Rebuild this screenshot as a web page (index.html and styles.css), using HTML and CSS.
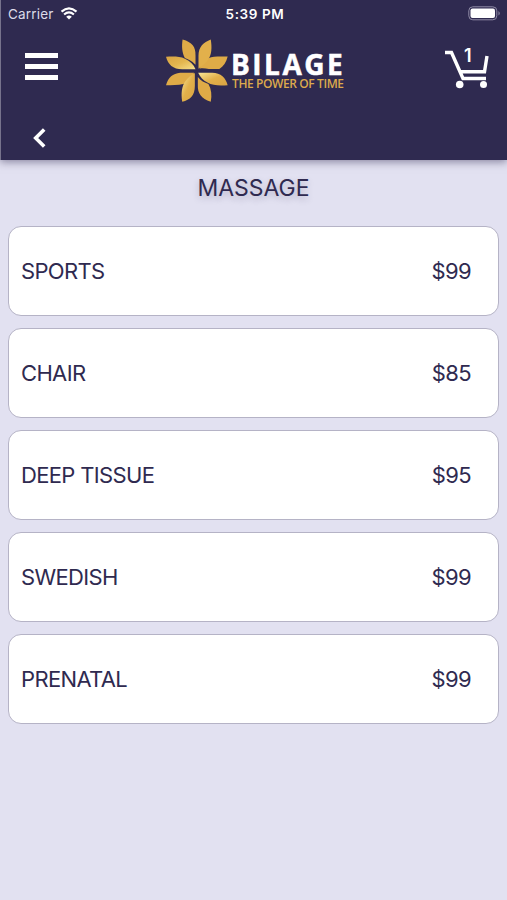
FILE: index.html
```html
<!DOCTYPE html>
<html lang="en">
<head>
  <meta charset="UTF-8" />
  <meta name="viewport" content="width=device-width, initial-scale=1" />
  <title>Bilage - Massage</title>
  <link rel="stylesheet" href="styles.css">
</head>
<body>
  <header class="header">
    <div class="status">
      <div class="carrier">
        <span>Carrier</span>
        <svg class="wifi" viewBox="0 0 18 13" width="18" height="13">
          <path d="M1.500 4.600Q9-2 16.500 4.600M4.100 7.500Q9 3.300 13.900 7.500" fill="none" stroke="#fff" stroke-width="2.200" />
          <path d="M6.200 9.700Q9 7.500 11.800 9.700L9 12.500Z" fill="#fff" />
        </svg>
      </div>
      <span class="time">5:39 PM</span>
      <svg class="battery" viewBox="0 0 33 15" width="33" height="15">
        <rect x="0.800" y="0.800" width="28" height="13" rx="4" fill="none" stroke="#8f8ba6" />
        <rect x="2.500" y="2.500" width="24.500" height="9.600" rx="2" fill="#fff" />
        <path d="M30.500 5Q33 7.300 30.500 9.600Z" fill="#8f8ba6" />
      </svg>
    </div>

    <div class="navbar">
      <button class="menu" aria-label="Menu"><i></i><i></i><i></i></button>
      <div class="logo">
        <svg class="flower" viewBox="35 27 187 189" width="62" height="63">
          <defs>
            <linearGradient id="gold" x1="0" y1="0" x2="1" y2="1">
              <stop offset="0" stop-color="#d9a443" />
              <stop offset="0.500" stop-color="#e3b64f" />
              <stop offset="1" stop-color="#f7e08c" />
            </linearGradient>
            <linearGradient id="goldBack" x1="1" y1="1" x2="0" y2="0">
              <stop offset="0" stop-color="#d9a443" />
              <stop offset="0.500" stop-color="#e2b04a" />
              <stop offset="1" stop-color="#f9e798" />
            </linearGradient>
          </defs>
          <g fill="#dfab47">
            <path d="M85 28C114 36 125 50 124 76V104C112 92 101 88 92 84C83 68 82 48 85 28Z" />
            <path d="M221 79H190C162 79 146 92 136 116C146 113 155 116 164 117H196C208 109 217 97 221 79Z" />
            <path d="M170 216C141 206 130 190 131 166V141C140 153 151 158 163 162C172 178 174 196 170 216Z" />
            <path d="M35 166C42 142 55 130 78 128H120C112 145 105 150 98 158C82 167 58 166 35 166Z" />
          </g>
          <g>
            <path fill="url(#gold)" d="M35 80C54 79 76 78 92 86C108 94 119 104 124 118H84C56 118 41 103 35 80Z" />
            <path fill="#e2b04b" d="M170 28C174 52 173 74 162 89C155 99 145 107 133 116V78C133 49 148 37 170 28Z" />
          </g>
          <g>
            <path fill="url(#goldBack)" d="M221 166C200 168 176 168 160 158C147 151 138 141 132 128H174C201 128 215 143 221 166Z" />
            <path fill="url(#goldBack)" d="M84 216C80 190 82 169 94 153C101 143 111 136 122 129V168C122 197 108 209 84 216Z" />
          </g>
        </svg>
        <div class="brand">
          <div class="name">BILAGE</div>
          <div class="tagline">THE POWER OF TIME</div>
        </div>
      </div>
      <div class="cart">
        <svg viewBox="0 0 44 41" width="44" height="41">
          <path d="M0 3.500H6.500L18 29.500H41M16 22.800H39.500L42 7" fill="none" stroke="#fff" stroke-width="3.400" />
          <circle cx="14.700" cy="35.500" r="3.800" fill="#fff" />
          <circle cx="38.500" cy="35.500" r="3.500" fill="#fff" />
        </svg>
        <span class="count">1</span>
      </div>
    </div>

    <button class="back" aria-label="Back">
      <svg viewBox="0 0 13 20" width="13" height="20">
        <path d="M11.200 1.500L2.700 10L11.200 18.500" fill="none" stroke="#fff" stroke-width="3.600" />
      </svg>
    </button>
  </header>

  <h1 class="title">MASSAGE</h1>

  <ul class="services">
    <li class="service"><span>SPORTS</span><span>$99</span></li>
    <li class="service"><span>CHAIR</span><span>$85</span></li>
    <li class="service"><span>DEEP TISSUE</span><span>$95</span></li>
    <li class="service"><span>SWEDISH</span><span>$99</span></li>
    <li class="service"><span>PRENATAL</span><span>$99</span></li>
  </ul>
</body>
</html>
```

FILE: styles.css
```css
* {
  box-sizing: border-box;
}
body {
  margin: 0;
  min-height: 900px;
  font-family: Inter, "Liberation Sans", sans-serif;
  color: #2f2a50;
  background: #e2e1f1;
}
button {
  padding: 0;
  border: none;
  background: none;
}
svg {
  display: block;
}
.header {
  height: 160px;
  background: #2f2a50;
  border-left: 1px solid #77738c;
  box-shadow: 0 2px 8px rgba(47, 42, 80, 0.5);
  color: #fff;
}
.status {
  display: grid;
  grid-template-columns: 1fr auto 1fr;
  align-items: center;
  height: 27px;
  padding: 0 6px 0 7px;
  font-size: 13.5px;
}
.carrier {
  display: flex;
  align-items: center;
  gap: 6px;
  color: #dddbe8;
  letter-spacing: 0.2px;
}
.time {
  padding-left: 1px;
  font-weight: 600;
  letter-spacing: 0.6px;
}
.battery {
  justify-self: end;
}
.navbar {
  display: flex;
  align-items: flex-start;
  height: 93px;
  padding: 12px 18px 0 24px;
}
.menu {
  display: flex;
  flex-direction: column;
  gap: 6px;
  width: 33px;
  margin-top: 14px;
}
.menu i {
  height: 5px;
  background: #fff;
}
.logo {
  display: flex;
  margin-left: 108px;
}
.brand {
  margin: 11px 0 0 3px;
  white-space: nowrap;
}
.name {
  font: 700 28px/28px "Open Sans", sans-serif;
  letter-spacing: 2.5px;
  -webkit-text-stroke: 0.5px #fff;
}
.tagline {
  font: 600 12px/12px "Open Sans", sans-serif;
  letter-spacing: -0.4px;
  padding-left: 1px;
  color: #dca94c;
}
.cart {
  position: relative;
  margin: 10px 0 0 auto;
}
.count {
  position: absolute;
  top: -3px;
  left: 19px;
  font-size: 18px;
  line-height: 20px;
  font-weight: 600;
}
.back {
  margin: 8px 0 0 32px;
}
.title {
  margin: 0;
  padding-top: 12px;
  font-size: 23px;
  line-height: 32px;
  font-weight: 400;
  text-align: center;
  text-shadow: 0 3px 6px rgba(47, 42, 80, 0.25);
}
.services {
  display: flex;
  flex-direction: column;
  gap: 12px;
  margin: 0;
  padding: 22px 8px 0;
  list-style: none;
}
.service {
  display: flex;
  align-items: center;
  justify-content: space-between;
  height: 90px;
  padding: 0 27px 0 12px;
  border: 1px solid #b5b3c6;
  border-radius: 13px;
  background: #fff;
  font-size: 22px;
  letter-spacing: -0.65px;
}
```
